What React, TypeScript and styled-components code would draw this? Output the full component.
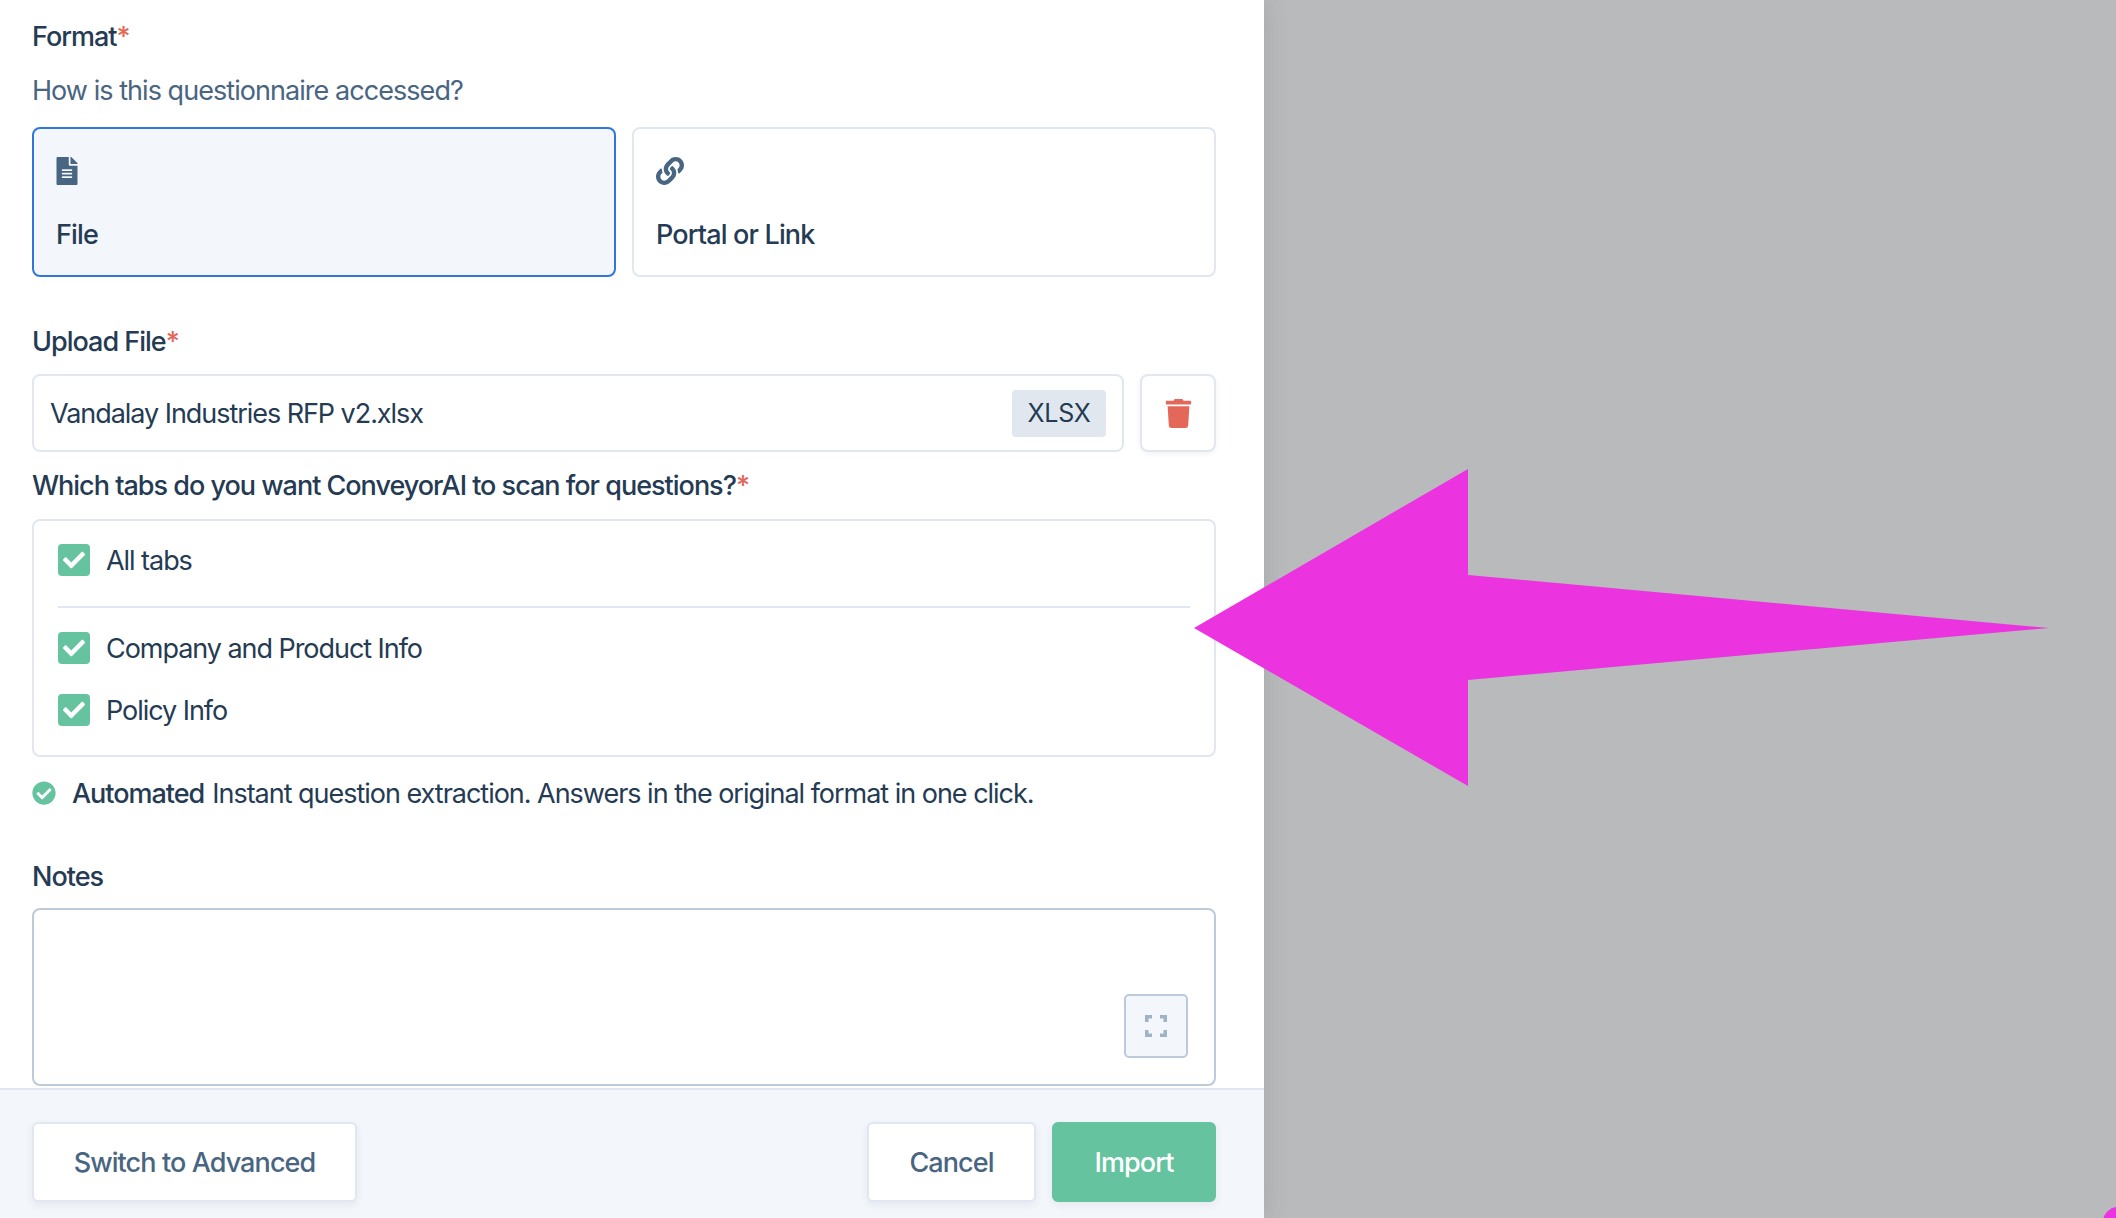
import React from 'react';
import styled, { createGlobalStyle } from 'styled-components';
import { FaCheck, FaCheckCircle, FaFileAlt, FaLink, FaTrash } from 'react-icons/fa';

const GlobalStyle = createGlobalStyle`
  html, body {
    margin: 0;
    padding: 0;
    height: 100%;
    overflow: hidden;
  }
  body {
    font-family: Inter, 'Liberation Sans', Arial, sans-serif;
    color: #243b53;
  }
  * {
    box-sizing: border-box;
  }
`;

const tabs = ['Company and Product Info', 'Policy Info'];

const Page = styled.div`
  position: relative;
  display: flex;
  width: 100%;
  height: 100vh;
  overflow: hidden;
  background-color: #b9babc;
`;

const Panel = styled.div`
  display: flex;
  flex-direction: column;
  flex: 0 0 1264px;
  height: 100%;
  background-color: #fff;
  box-shadow: 0 0 24px rgba(60, 66, 72, 0.16);
`;

const Form = styled.div`
  flex: 1;
  padding: 21px 48px 0 32px;
  overflow: hidden;
`;

const Label = styled.div<{ $top?: number }>`
  margin-top: ${(p) => p.$top ?? 0}px;
  font-size: 27px;
  line-height: 32px;
  font-weight: 500;
  letter-spacing: -1px;
  color: #243b53;
`;

const Required = styled.span`
  color: #e3685a;
`;

const Hint = styled.div`
  margin-top: 22px;
  font-size: 27px;
  line-height: 32px;
  letter-spacing: -0.95px;
  color: #486581;
`;

const Options = styled.div`
  display: grid;
  grid-template-columns: 584px 584px;
  gap: 16px;
  margin-top: 20px;
`;

const OptionCard = styled.div<{ $selected?: boolean }>`
  display: flex;
  flex-direction: column;
  justify-content: space-between;
  height: 150px;
  padding: 28px 22px 24px;
  border: 2px solid ${(p) => (p.$selected ? '#3176dd' : '#e1e7f0')};
  border-radius: 8px;
  background-color: ${(p) => (p.$selected ? '#f3f6fa' : '#fff')};
  color: #486581;
`;

const FileIcon = styled(FaFileAlt)`
  width: 22px;
  height: 28px;
`;

const OptionTitle = styled.div`
  font-size: 27px;
  line-height: 32px;
  font-weight: 500;
  letter-spacing: -0.85px;
  color: #243b53;
`;

const UploadRow = styled.div`
  display: flex;
  gap: 16px;
  margin-top: 16px;
`;

const FileField = styled.div`
  display: flex;
  flex: 1;
  align-items: center;
  justify-content: space-between;
  height: 78px;
  padding: 0 16px;
  border: 2px solid #e1e7f0;
  border-radius: 8px;
  font-size: 27px;
  letter-spacing: -1.05px;
`;

const Chip = styled.span`
  display: flex;
  align-items: center;
  justify-content: center;
  width: 94px;
  height: 47px;
  border-radius: 4px;
  background-color: #e1e7ef;
  font-size: 25px;
  letter-spacing: -0.2px;
`;

const TrashButton = styled.div`
  display: flex;
  align-items: center;
  justify-content: center;
  width: 76px;
  height: 78px;
  border: 2px solid #e1e7f0;
  border-radius: 8px;
  background-color: #fff;
  color: #e3685a;
  box-shadow: 0 2px 5px rgba(36, 59, 83, 0.06);
`;

const TabsBox = styled.div`
  height: 238px;
  margin-top: 17px;
  padding: 23px 24px 0;
  border: 2px solid #e1e7f0;
  border-radius: 8px;
`;

const CheckRow = styled.div`
  display: flex;
  align-items: center;
  gap: 16px;
  height: 32px;
  margin-bottom: 30px;
  font-size: 27px;
  letter-spacing: -1.05px;
`;

const CheckBox = styled.span`
  display: flex;
  flex: 0 0 32px;
  align-items: center;
  justify-content: center;
  height: 32px;
  border-radius: 4px;
  background-color: #65c3a0;
  color: #fff;
`;

const Divider = styled.div`
  height: 2px;
  margin: 0 0 24px;
  background-color: #e1e7f0;
`;

const AutoNote = styled.div`
  display: flex;
  align-items: center;
  height: 32px;
  margin-top: 20px;
  font-size: 27px;
  letter-spacing: -1.02px;
  color: #243b53;
  svg {
    flex: 0 0 24px;
    margin-right: 16px;
    color: #65c3a0;
  }
  strong {
    margin-right: 8px;
    font-weight: 500;
  }
`;

const NotesField = styled.div`
  position: relative;
  height: 178px;
  margin-top: 15px;
  border: 2px solid #bccad9;
  border-radius: 8px;
`;

const ExpandButton = styled.div`
  position: absolute;
  right: 26px;
  bottom: 26px;
  display: flex;
  align-items: center;
  justify-content: center;
  width: 64px;
  height: 64px;
  border: 2px solid #bccad9;
  border-radius: 5px;
  background-color: #f3f6fa;
`;

const Footer = styled.div`
  display: flex;
  flex: 0 0 130px;
  justify-content: space-between;
  padding: 32px 48px 0 32px;
  border-top: 2px solid #e1e7f0;
  background-color: #f3f6fa;
`;

const FooterActions = styled.div`
  display: flex;
  gap: 16px;
`;

const Button = styled.div<{ $primary?: boolean; $width: number }>`
  display: flex;
  align-items: center;
  justify-content: center;
  width: ${(p) => p.$width}px;
  height: 80px;
  border: 2px solid ${(p) => (p.$primary ? '#65c3a0' : '#e1e7f0')};
  border-radius: 6px;
  background-color: ${(p) => (p.$primary ? '#65c3a0' : '#fff')};
  color: ${(p) => (p.$primary ? '#fff' : '#486581')};
  font-size: 27px;
  font-weight: 500;
  letter-spacing: -0.9px;
  box-shadow: 0 3px 8px rgba(36, 59, 83, 0.07);
`;

const ArrowOverlay = styled.svg`
  position: absolute;
  top: 0;
  left: 0;
  pointer-events: none;
`;

const Check = () => (
  <CheckBox>
    <FaCheck size={22} />
  </CheckBox>
);

export default function App() {
  return (
    <>
      <GlobalStyle />
      <Page>
        <Panel>
          <Form>
            <Label>
              Format<Required>*</Required>
            </Label>
            <Hint>How is this questionnaire accessed?</Hint>
            <Options>
              <OptionCard $selected>
                <FileIcon />
                <OptionTitle>File</OptionTitle>
              </OptionCard>
              <OptionCard>
                <FaLink size={28} />
                <OptionTitle>Portal or Link</OptionTitle>
              </OptionCard>
            </Options>

            <Label $top={49}>
              Upload File<Required>*</Required>
            </Label>
            <UploadRow>
              <FileField>
                Vandalay Industries RFP v2.xlsx
                <Chip>XLSX</Chip>
              </FileField>
              <TrashButton>
                <FaTrash size={29} />
              </TrashButton>
            </UploadRow>

            <Label $top={18}>
              Which tabs do you want ConveyorAI to scan for questions?<Required>*</Required>
            </Label>
            <TabsBox>
              <CheckRow>
                <Check />
                All tabs
              </CheckRow>
              <Divider />
              {tabs.map((tab) => (
                <CheckRow key={tab}>
                  <Check />
                  {tab}
                </CheckRow>
              ))}
            </TabsBox>

            <AutoNote>
              <FaCheckCircle size={24} />
              <strong>Automated</strong>
              Instant question extraction. Answers in the original format in one click.
            </AutoNote>

            <Label $top={52}>Notes</Label>
            <NotesField>
              <ExpandButton>
                <svg width="22" height="22" viewBox="0 0 22 22" fill="none" stroke="#9fb3c8" strokeWidth="3.5">
                  <path d="M1.75 7V1.75H7M15 1.75h5.25V7M20.25 15v5.25H15M7 20.25H1.75V15" />
                </svg>
              </ExpandButton>
            </NotesField>
          </Form>
          <Footer>
            <Button $width={325}>Switch to Advanced</Button>
            <FooterActions>
              <Button $width={169}>Cancel</Button>
              <Button $primary $width={164}>
                Import
              </Button>
            </FooterActions>
          </Footer>
        </Panel>
        <ArrowOverlay width="2116" height="1218" viewBox="0 0 2116 1218">
          <polygon points="1194,628 1468,469 1468,575 2049,628 1468,680 1468,786" fill="#ec33e0" />
          <circle cx="2118" cy="1222" r="15" fill="#ec33e0" />
        </ArrowOverlay>
      </Page>
    </>
  );
}
